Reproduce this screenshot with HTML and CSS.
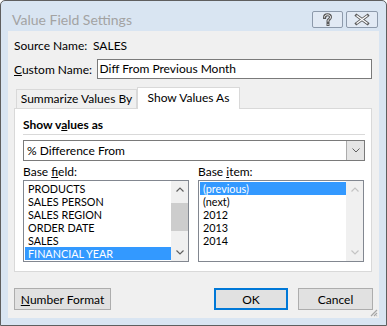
FILE: index.html
```html
<!DOCTYPE html>
<html lang="en">

<head>
    <meta charset="UTF-8">
    <title>Value Field Settings</title>
    <link rel="stylesheet" href="styles.css">
</head>

<body>
    <div class="window">
        <div class="titlebar">
            <span class="title">Value Field Settings</span>
            <div class="caption-buttons">
                <div class="cap-btn cap-help">
                    <svg width="29" height="15" viewBox="0 0 29 15">
                        <path d="M11.5 5.5 C11.5 3.8 12.8 2.8 14.5 2.8 C16.2 2.8 17.5 3.8 17.5 5.3 C17.5 6.9 15.2 7.4 15 8.8 L15 9.6" fill="none" stroke="#5a5a5a" stroke-width="3" stroke-linecap="square"/>
                        <rect x="13.5" y="11" width="3" height="3" fill="#5a5a5a"/>
                        <path d="M11.5 5.5 C11.5 3.8 12.8 2.8 14.5 2.8 C16.2 2.8 17.5 3.8 17.5 5.3 C17.5 6.9 15.2 7.4 15 8.8 L15 9.6" fill="none" stroke="#fff" stroke-width="1"/>
                        <rect x="14.5" y="12" width="1" height="1" fill="#fff"/>
                    </svg>
                </div>
                <div class="cap-btn cap-close">
                    <svg width="30" height="15" viewBox="0 0 30 15">
                        <path d="M9.5 3.5 L20.5 11.5 M20.5 3.5 L9.5 11.5" stroke="#5a5a5a" stroke-width="3" stroke-linecap="square"/>
                        <path d="M9.5 3.5 L20.5 11.5 M20.5 3.5 L9.5 11.5" stroke="#fff" stroke-width="1.3"/>
                    </svg>
                </div>
            </div>
        </div>

        <div class="client">
            <div class="field-row source-row">
                <span class="field-label source-label">Source Name:</span>
                <span>SALES</span>
            </div>
            <div class="field-row name-row">
                <span class="field-label name-label"><u>C</u>ustom Name:</span>
                <div class="textbox">Diff From Previous Month</div>
            </div>

            <div class="tabs">
                <div class="tab tab-summarize">Summarize Values By</div>
                <div class="tab tab-active">Show Values As</div>
            </div>

            <div class="panel">
                <div class="section-title">Show v<u>a</u>lues as</div>
                <div class="separator"></div>
                <div class="combo">
                    <span class="combo-text">% Difference From</span>
                    <span class="combo-btn">
                        <svg width="8" height="5" viewBox="0 0 8 5"><path d="M0.5 0.5 L4 4 L7.5 0.5" fill="none" stroke="#606060" stroke-width="1"/></svg>
                    </span>
                </div>

                <div class="lists">
                    <div class="list-col">
                        <div class="list-label">Base <u>f</u>ield:</div>
                        <div class="listbox">
                            <div class="items">
                                <div class="item">PRODUCTS</div>
                                <div class="item">SALES PERSON</div>
                                <div class="item">SALES REGION</div>
                                <div class="item">ORDER DATE</div>
                                <div class="item">SALES</div>
                                <div class="item item-selected">FINANCIAL YEAR</div>
                            </div>
                            <div class="scrollbar">
                                <div class="scroll-arrow">
                                    <svg width="8" height="5" viewBox="0 0 8 5"><path d="M0.5 4.5 L4 1 L7.5 4.5" fill="none" stroke="#606060" stroke-width="1.2"/></svg>
                                </div>
                                <div class="scroll-track"><div class="scroll-thumb"></div></div>
                                <div class="scroll-arrow">
                                    <svg width="8" height="5" viewBox="0 0 8 5"><path d="M0.5 0.5 L4 4 L7.5 0.5" fill="none" stroke="#606060" stroke-width="1.2"/></svg>
                                </div>
                            </div>
                        </div>
                    </div>

                    <div class="list-col">
                        <div class="list-label">Base <u>i</u>tem:</div>
                        <div class="listbox">
                            <div class="items">
                                <div class="item item-selected">(previous)</div>
                                <div class="item">(next)</div>
                                <div class="item">2012</div>
                                <div class="item">2013</div>
                                <div class="item">2014</div>
                            </div>
                            <div class="scrollbar scrollbar-disabled">
                                <div class="scroll-arrow">
                                    <svg width="8" height="5" viewBox="0 0 8 5"><path d="M0.5 4.5 L4 1 L7.5 4.5" fill="none" stroke="#c4c4c4" stroke-width="1.2"/></svg>
                                </div>
                                <div class="scroll-track"></div>
                                <div class="scroll-arrow">
                                    <svg width="8" height="5" viewBox="0 0 8 5"><path d="M0.5 0.5 L4 4 L7.5 0.5" fill="none" stroke="#c4c4c4" stroke-width="1.2"/></svg>
                                </div>
                            </div>
                        </div>
                    </div>
                </div>
            </div>

            <div class="footer">
                <div class="btn btn-format"><u>N</u>umber Format</div>
                <div class="btn btn-ok">OK</div>
                <div class="btn btn-cancel">Cancel</div>
            </div>

            <svg class="grip" width="8" height="8" viewBox="0 0 8 8">
                <path d="M7 1 L1 7 M7 4 L4 7 M7 6.5 L6.5 7" stroke="#a6a6a6" stroke-width="1.2"/>
            </svg>
        </div>
    </div>
</body>

</html>
```

FILE: styles.css
```css
body {
    margin: 0;
    background-color: #ffffff;
    font-family: Lato, "Liberation Sans", sans-serif;
    font-size: 12px;
    color: #000000;
}

.window {
    width: 387px;
    height: 326px;
    box-sizing: border-box;
    border: 1px solid #5f5f5f;
    border-radius: 5px 5px 0 0;
    background-color: #d9e5f2;
    padding: 0 7px 7px 7px;
    display: flex;
    flex-direction: column;
}

.titlebar {
    height: 30px;
    display: flex;
    justify-content: space-between;
    align-items: flex-start;
    padding: 0 1px 0 4px;
}

.title {
    margin-top: 10px;
    line-height: 18px;
    font-size: 14px;
    color: #a3a3a3;
}

.caption-buttons {
    display: flex;
    gap: 3px;
    margin-top: 10px;
}

.cap-btn {
    height: 17px;
    box-sizing: border-box;
    border: 1px solid #8d9aab;
    border-radius: 2px;
    background-color: #e2eaf4;
    display: flex;
}

.cap-help {
    width: 31px;
}

.cap-close {
    width: 32px;
}

.client {
    flex: 1;
    position: relative;
    background-color: #f0f0f0;
    padding: 6px 7px 0 6px;
}

.field-row {
    display: flex;
    align-items: center;
}

.source-row {
    height: 16px;
}

.source-label {
    width: 79px;
}

.name-row {
    margin-top: 6px;
    height: 20px;
}

.name-label {
    width: 83px;
}

.textbox {
    width: 277px;
    height: 20px;
    box-sizing: border-box;
    border: 1px solid #7a7a7a;
    background-color: #ffffff;
    padding-left: 2px;
    line-height: 18px;
}

.tabs {
    display: flex;
    align-items: flex-end;
    margin-top: 8px;
    height: 21px;
    padding-left: 2px;
}

.tab {
    box-sizing: border-box;
    border: 1px solid #d9d9d9;
    border-bottom: none;
    text-align: center;
}

.tab-summarize {
    width: 121px;
    height: 19px;
    line-height: 18px;
    background-color: #f0f0f0;
}

.tab-active {
    width: 103px;
    height: 22px;
    line-height: 19px;
    margin-bottom: -1px;
    background-color: #ffffff;
    position: relative;
}

.panel {
    border: 1px solid #d9d9d9;
    background-color: #ffffff;
    padding: 8px 6px 9px 8px;
}

.section-title {
    font-weight: bold;
    line-height: 16px;
}

.separator {
    margin-top: 1px;
    height: 1px;
    background-color: #d9d9d9;
}

.combo {
    margin-top: 5px;
    height: 21px;
    box-sizing: border-box;
    border: 1px solid #7a7a7a;
    display: flex;
    align-items: stretch;
}

.combo-text {
    flex: 1;
    padding-left: 3px;
    line-height: 19px;
}

.combo-btn {
    width: 18px;
    box-sizing: border-box;
    border-left: 1px solid #acacac;
    background-color: #e5e5e5;
    display: flex;
    align-items: center;
    justify-content: center;
}

.lists {
    display: grid;
    grid-template-columns: 166px 166px;
    column-gap: 9px;
    margin-top: 3px;
}

.list-label {
    line-height: 16px;
}

.listbox {
    height: 82px;
    box-sizing: border-box;
    border: 1px solid #828790;
    display: flex;
}

.items {
    flex: 1;
    padding: 1px 0 0 1px;
}

.item {
    height: 13px;
    line-height: 13px;
    font-size: 10.8px;
    padding-left: 3px;
    white-space: nowrap;
}

.item-selected {
    background-color: #3399ff;
    color: #ffffff;
}

.scrollbar {
    width: 17px;
    background-color: #f0f0f0;
    display: flex;
    flex-direction: column;
}

.scroll-arrow {
    height: 17px;
    display: flex;
    align-items: center;
    justify-content: center;
}

.scroll-track {
    flex: 1;
}

.scroll-thumb {
    margin-top: 5px;
    height: 28px;
    background-color: #cdcdcd;
}

.footer {
    display: flex;
    margin-top: 16px;
    margin-right: -1px;
}

.btn {
    height: 22px;
    box-sizing: border-box;
    border: 1px solid #adadad;
    background-color: #e1e1e1;
    display: flex;
    align-items: center;
    justify-content: center;
}

.btn-format {
    width: 97px;
}

.btn-ok {
    width: 74px;
    margin-left: auto;
    border: 2px solid #0078d7;
}

.btn-cancel {
    width: 75px;
    margin-left: 10px;
}

.grip {
    position: absolute;
    right: 1px;
    bottom: 1px;
}
```
